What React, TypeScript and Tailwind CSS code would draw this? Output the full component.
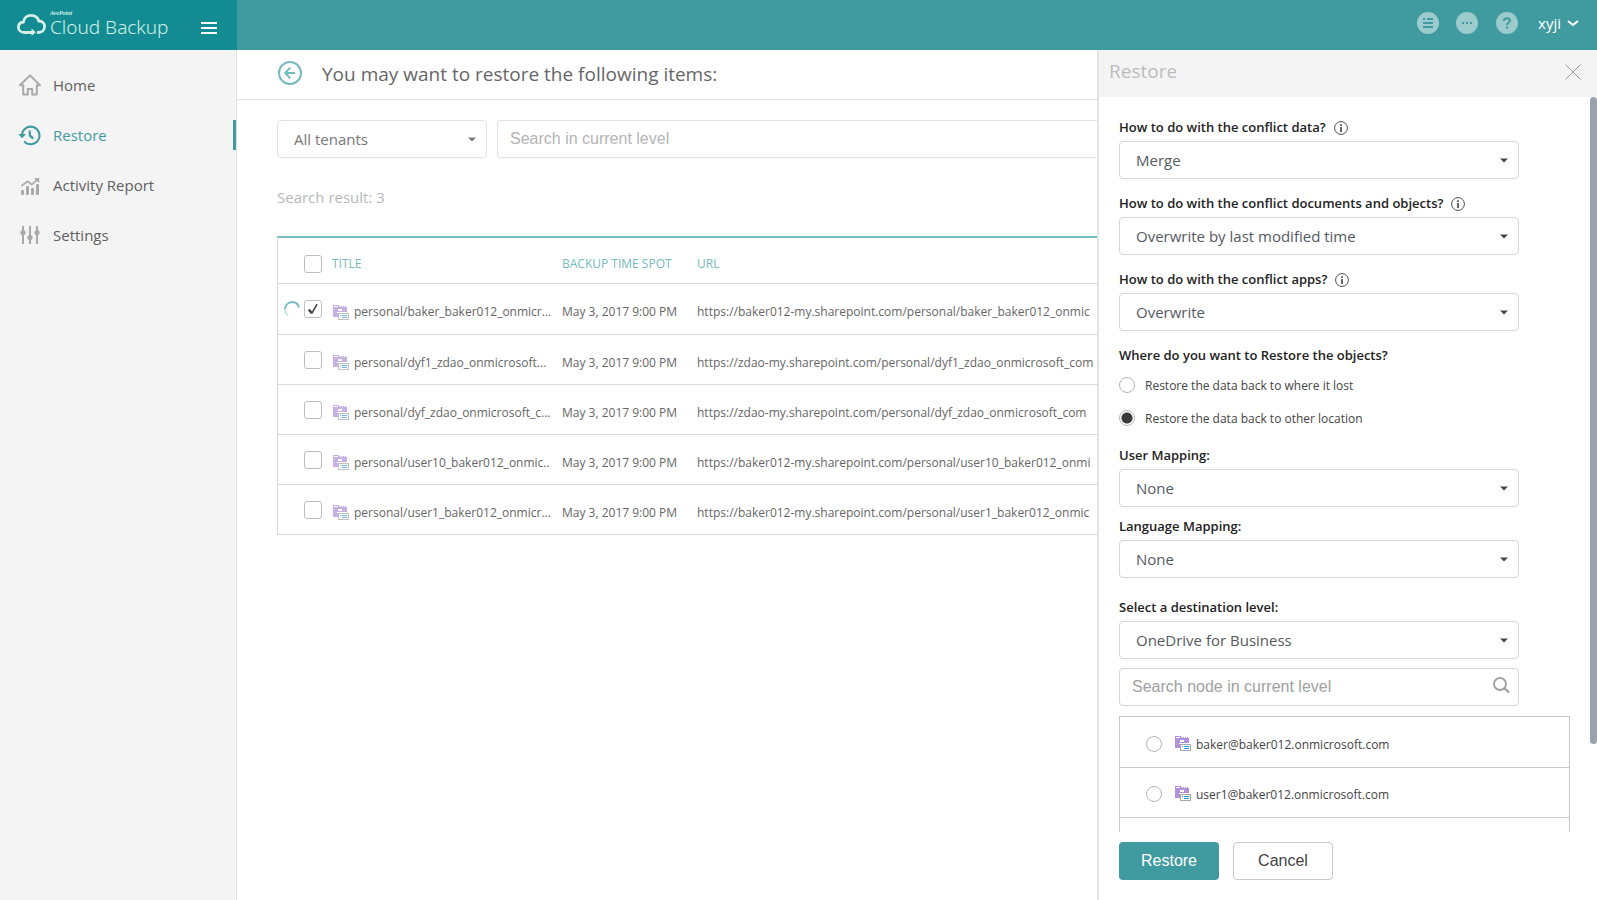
import React, { useState } from "react";

const SANS = "font-['Open_Sans','Noto_Sans',sans-serif]";
const ARIAL = "font-['Liberation_Sans',Arial,sans-serif]";

type IconProps = { className?: string };

function CloudLogo() {
  return (
    <svg width="30" height="24" viewBox="0 0 30 24" fill="none" stroke="#d3efe8" strokeWidth="2.8" aria-hidden="true">
      <path d="M17 19.5H8.5C5 19.5 2.4 17.4 2.4 14.2C2.4 11.4 4.4 9.3 7.4 9C8.2 5 11.2 2.4 15.2 2.4C19.1 2.4 21.8 4.6 22.8 8C26.2 8 28.6 10.4 28.6 13.6C28.6 17 26 19.5 22.4 19.5H21" />
      <path d="M15.5 15.6L20 19.2L15.5 22.8Z" fill="#d3efe8" stroke="none" />
    </svg>
  );
}

function HomeIcon() {
  return (
    <svg width="24" height="24" viewBox="0 0 24 24" fill="none" stroke="#a9a9a9" strokeWidth="2" strokeLinejoin="round" aria-hidden="true">
      <path d="M2 12.2L12 2.4L22 12.2H18.8V21.6H14.2V16H9.8V21.6H5.2V12.2Z" />
    </svg>
  );
}

function RestoreIcon() {
  return (
    <svg width="24" height="24" viewBox="0 0 24 24" fill="none" stroke="#409ba0" strokeWidth="2" aria-hidden="true">
      <path d="M4 11.2A8.8 8.8 0 1 1 6.2 18.4" />
      <path d="M0.2 11H8L4.1 15.2Z" fill="#409ba0" stroke="none" />
      <path d="M11.8 7.4V12.4L15.2 15.6" strokeWidth="2.2" />
    </svg>
  );
}

function ReportIcon() {
  return (
    <svg width="24" height="24" viewBox="0 0 24 24" fill="#a9a9a9" aria-hidden="true">
      <rect x="3" y="17" width="3" height="5" rx="1" />
      <rect x="8" y="13" width="3" height="9" rx="1" />
      <rect x="13" y="15" width="3" height="7" rx="1" />
      <rect x="18" y="11" width="3" height="11" rx="1" />
      <path d="M3.4 13L9.6 8.4L13.8 11.6L19.6 6.2" fill="none" stroke="#a9a9a9" strokeWidth="1.8" />
      <path d="M16 5H21.2V10.2Z" />
    </svg>
  );
}

function SettingsIcon() {
  return (
    <svg width="24" height="24" viewBox="0 0 24 24" fill="#a9a9a9" aria-hidden="true">
      <rect x="4" y="3" width="2" height="18" />
      <rect x="11" y="3" width="2" height="18" />
      <rect x="18" y="3" width="2" height="18" />
      <circle cx="5" cy="9.5" r="2.6" />
      <circle cx="12" cy="14.5" r="2.6" />
      <circle cx="19" cy="9.5" r="2.6" />
    </svg>
  );
}

function SiteIcon({ className }: IconProps) {
  return (
    <svg className={`shrink-0 ${className}`} width="16" height="15" viewBox="0 0 16 15" shapeRendering="crispEdges" aria-hidden="true">
      <path d="M0 0H6V1H7V2H8V1H9V2H10V1H11V2H12V1H13V2H14V8H5V12H0Z" fill="#b091da" />
      <path d="M1 1H5V2H1ZM5 4H9V6H5Z" fill="#fff" />
      <path d="M4 7H16V8H4Z" fill="#fff" />
      <rect x="5.5" y="8.5" width="10" height="6" fill="#fff" stroke="#a8a8a8" />
      <path d="M7 10H8V11H7ZM9 10H14V11H9ZM9 12H14V13H9Z" fill="#2a9fe0" />
    </svg>
  );
}

function Caret({ className }: IconProps) {
  return (
    <svg className={`pointer-events-none absolute right-[11px] top-[17px] ${className}`} width="8" height="5" viewBox="0 0 8 5" aria-hidden="true">
      <path d="M0 0.5H8L4 4.5Z" fill="currentColor" />
    </svg>
  );
}

function InfoIcon() {
  return (
    <svg width="14" height="14" viewBox="0 0 14 14" fill="none" stroke="#4a4a4a" aria-hidden="true">
      <circle cx="7" cy="7" r="6.4" />
      <path d="M7 3.2V5M7 6V11" strokeWidth="1.7" />
    </svg>
  );
}

function BackIcon() {
  return (
    <svg width="24" height="24" viewBox="0 0 24 24" fill="none" stroke="#75bbbd" strokeWidth="2" aria-hidden="true">
      <circle cx="12" cy="12" r="11" />
      <path d="M17 12H7.5M12.2 6.6L7.2 12L12.2 17.4" />
    </svg>
  );
}

function Spinner() {
  return (
    <svg width="18" height="18" viewBox="0 0 18 18" fill="none" strokeWidth="2" aria-hidden="true">
      <path d="M5 15.2A7.3 7.3 0 0 1 2 9" stroke="#c9e6e7" />
      <path d="M2 9A7.3 7.3 0 0 1 9 2A7.3 7.3 0 0 1 16 7.5" stroke="#79bfc1" />
    </svg>
  );
}

function SearchIcon() {
  return (
    <svg className="absolute right-[9px] top-[9px]" width="17" height="17" viewBox="0 0 17 17" fill="none" stroke="#a3a3a3" strokeWidth="2" aria-hidden="true">
      <circle cx="7" cy="7" r="6" />
      <path d="M11.2 11.2L16 15.4" strokeWidth="2.4" />
    </svg>
  );
}

const navItems = [
  { label: "Home", Icon: HomeIcon, active: false },
  { label: "Restore", Icon: RestoreIcon, active: true },
  { label: "Activity Report", Icon: ReportIcon, active: false },
  { label: "Settings", Icon: SettingsIcon, active: false },
];

const rows = [
  { title: "personal/baker_baker012_onmicr...", url: "https://baker012-my.sharepoint.com/personal/baker_baker012_onmic" },
  { title: "personal/dyf1_zdao_onmicrosoft...", url: "https://zdao-my.sharepoint.com/personal/dyf1_zdao_onmicrosoft_com" },
  { title: "personal/dyf_zdao_onmicrosoft_c...", url: "https://zdao-my.sharepoint.com/personal/dyf_zdao_onmicrosoft_com" },
  { title: "personal/user10_baker012_onmic..", url: "https://baker012-my.sharepoint.com/personal/user10_baker012_onmi" },
  { title: "personal/user1_baker012_onmicr...", url: "https://baker012-my.sharepoint.com/personal/user1_baker012_onmic" },
];

function Check(props: { label: string; checked?: boolean; onChange?: () => void }) {
  return (
    <span className="relative block size-[18px]">
      <input
        type="checkbox"
        aria-label={props.label}
        checked={props.checked ?? false}
        onChange={props.onChange ?? (() => {})}
        className="block size-[18px] appearance-none rounded-[3px] border border-[#bdbdbd] bg-white"
      />
      {props.checked && (
        <svg className="pointer-events-none absolute left-0 top-0" width="18" height="18" viewBox="0 0 18 18" fill="none" stroke="#444" aria-hidden="true">
          <path d="M4.8 9.6L8 13.2" strokeWidth="2.4" />
          <path d="M7.8 13.4L13 4.2" strokeWidth="1.6" />
        </svg>
      )}
    </span>
  );
}

function Field(props: { id: string; label: string; value: string; info?: boolean; className: string }) {
  return (
    <div className={props.className}>
      <div className="flex h-7 items-center gap-2 pt-px">
        <label htmlFor={props.id} className="text-[13px] font-semibold text-[#222]">
          {props.label}
        </label>
        {props.info && <InfoIcon />}
      </div>
      <div className="relative">
        <select
          id={props.id}
          className="block h-[38px] w-full appearance-none rounded border border-[#d5d5d5] bg-white pl-4 pr-8 text-[15px] text-[#555a5f]"
        >
          <option>{props.value}</option>
        </select>
        <Caret className="text-[#444]" />
      </div>
    </div>
  );
}

const radioClass =
  "block size-4 shrink-0 appearance-none rounded-full border border-[#b5b5b5] bg-white checked:bg-[radial-gradient(circle,#3a3a3a_5px,#fff_6px)]";

export default function App() {
  const [picked, setPicked] = useState([true, false, false, false, false]);
  const [place, setPlace] = useState("other");

  return (
    <div className={`flex h-screen flex-col bg-white text-[#666] ${SANS}`}>
      <header className="flex h-[50px] shrink-0 bg-[#409ba0]">
        <div className="flex w-[237px] shrink-0 items-center bg-[#128c92] pl-4">
          <CloudLogo />
          <div className="flex flex-col pl-1 font-['Noto_Sans',sans-serif] text-[#d3efe8]">
            <span className="h-1 font-['Liberation_Serif',serif] text-[6px] font-bold italic leading-[4px]">AvePoint</span>
            <span className="text-[19px] font-light leading-6">Cloud Backup</span>
          </div>
          <button type="button" aria-label="Toggle menu" className="ml-auto mr-5 mt-1.5 flex w-4 flex-col gap-[3px]">
            <span className="h-0.5 bg-white" />
            <span className="h-0.5 bg-white" />
            <span className="h-0.5 bg-white" />
          </button>
        </div>
        <div className="flex flex-1 items-center justify-end pb-1 pr-[18px]">
          <button type="button" aria-label="Tasks" className="mr-[17px] flex size-[22px] items-center justify-center rounded-full bg-[#9ccbcd]">
            <svg width="10" height="10" viewBox="0 0 10 10" fill="#409ba0" aria-hidden="true">
              <path d="M0 0H2V2H0ZM4 0H10V2H4ZM0 4H10V6H0ZM0 8H10V10H0Z" />
            </svg>
          </button>
          <button type="button" aria-label="More" className="mr-[18px] flex size-[22px] items-center justify-center rounded-full bg-[#9ccbcd]">
            <svg width="10" height="2" viewBox="0 0 10 2" fill="#409ba0" aria-hidden="true">
              <path d="M0 0H2V2H0ZM4 0H6V2H4ZM8 0H10V2H8Z" />
            </svg>
          </button>
          <button type="button" aria-label="Help" className="mr-5 flex size-[22px] items-center justify-center rounded-full bg-[#9ccbcd]">
            <svg width="10" height="12" viewBox="0 0 10 12" fill="none" stroke="#409ba0" strokeWidth="2" aria-hidden="true">
              <path d="M1.8 4C1.8 2 3.2 1.2 5 1.2C6.8 1.2 8 2.2 8 3.7C8 5.6 5 5.6 5 8.2M5 9.6V11.6" />
            </svg>
          </button>
          <button type="button" className="flex items-center gap-1.5 text-[15px] text-white">
            xyji
            <svg width="12" height="8" viewBox="0 0 12 8" fill="none" stroke="#fff" strokeWidth="2" aria-hidden="true">
              <path d="M1 2L6 6L11 2" />
            </svg>
          </button>
        </div>
      </header>

      <div className="flex min-h-0 flex-1">
        <nav className="w-[237px] shrink-0 border-r border-[#e0e0e0] bg-[#f4f4f4] pt-[10px]">
          {navItems.map(({ label, Icon, active }) => (
            <a
              key={label}
              href="#"
              className={`flex h-[50px] items-center justify-between pl-[18px] text-[15px] ${active ? "text-[#409ba0]" : "text-[#5f5f5f]"}`}
            >
              <span className="flex items-center gap-[11px]">
                <Icon />
                {label}
              </span>
              {active && <span className="h-[30px] w-[3px] bg-[#409ba0]" />}
            </a>
          ))}
        </nav>

        <main className="min-w-0 flex-1 overflow-hidden">
          <div className="flex h-[50px] gap-5 border-b border-[#e4e4e4] pl-10">
            <a href="#" aria-label="Back" className="pl-px pt-[11px]">
              <BackIcon />
            </a>
            <h1 className="text-[19px] leading-[48px]">You may want to restore the following items:</h1>
          </div>

          <div className="pl-10 pt-5">
            <div className="flex gap-[10px]">
              <div className="relative w-[210px] shrink-0">
                <select aria-label="Tenants" className="block h-[38px] w-full appearance-none rounded border border-[#e2e2e2] bg-white pl-4 text-[15px] text-[#777]">
                  <option>All tenants</option>
                </select>
                <Caret className="text-[#777]" />
              </div>
              <input
                type="text"
                aria-label="Search in current level"
                placeholder="Search in current level"
                className={`h-[38px] min-w-0 flex-1 rounded-l border border-r-0 border-[#e2e2e2] px-3 pb-px text-base placeholder:text-[#b4b4b4] ${ARIAL}`}
              />
            </div>
            <p className="mt-7 h-[22px] text-[15px] leading-[22px] text-[#b8b8b8]">Search result: 3</p>

            <table className="mt-7 w-full table-fixed border-separate border-spacing-0 border-l border-t-2 border-l-[#dadada] border-t-[#75bbbd] text-left text-xs">
              <colgroup>
                <col className="w-[26px]" />
                <col className="w-[28px]" />
                <col className="w-[230px]" />
                <col className="w-[135px]" />
                <col />
              </colgroup>
              <thead>
                <tr className="h-[46px] text-xs text-[#75bbbd] [&>th]:border-b [&>th]:border-[#dadada] [&>th]:p-0 [&>th]:pt-1.5 [&>th]:font-normal">
                  <th />
                  <th>
                    <Check label="Select all" />
                  </th>
                  <th>TITLE</th>
                  <th>BACKUP TIME SPOT</th>
                  <th>URL</th>
                </tr>
              </thead>
              <tbody>
                {rows.map((row, i) => (
                  <tr key={row.url} className="h-[50px] first:h-[51px] [&>td]:border-b [&>td]:border-[#dadada] [&>td]:p-0">
                    <td className="pl-[5px]!">{i === 0 && <Spinner />}</td>
                    <td>
                      <Check label={row.title} checked={picked[i]} onChange={() => setPicked(picked.map((p, j) => (j === i ? !p : p)))} />
                    </td>
                    <td className="pt-1.5!">
                      <div className="flex items-center gap-[5px] whitespace-nowrap pl-px">
                        <SiteIcon className="opacity-70" />
                        {row.title}
                      </div>
                    </td>
                    <td className="whitespace-nowrap pt-1.5!">May 3, 2017 9:00 PM</td>
                    <td className="overflow-hidden whitespace-nowrap pt-1.5!">{row.url}</td>
                  </tr>
                ))}
              </tbody>
            </table>
          </div>
        </main>

        <aside className="flex w-[500px] shrink-0 flex-col border-l-2 border-[#e4e4e4] bg-white">
          <div className="flex h-[47px] shrink-0 items-center justify-between bg-[#f4f4f4] pb-1 pl-[10px] pr-4">
            <h2 className="text-[19px] text-[#bcbcbc]">Restore</h2>
            <button type="button" aria-label="Close">
              <svg width="16" height="16" viewBox="0 0 16 16" stroke="#9a9a9a" aria-hidden="true">
                <path d="M0.5 0.5L15.5 15.5M15.5 0.5L0.5 15.5" />
              </svg>
            </button>
          </div>

          <div className="relative min-h-0 flex-1">
            <div className="h-full overflow-y-auto pl-5 pr-[27px] pt-4 [scrollbar-width:none]">
              <div className="w-[400px]">
                <Field id="conflict-data" label="How to do with the conflict data?" value="Merge" info className="mb-[10px]" />
                <Field id="conflict-docs" label="How to do with the conflict documents and objects?" value="Overwrite by last modified time" info className="mb-[10px]" />
                <Field id="conflict-apps" label="How to do with the conflict apps?" value="Overwrite" info className="mb-[10px]" />
                <fieldset>
                  <legend className="flex h-7 items-center pt-px text-[13px] font-semibold text-[#222]">Where do you want to Restore the objects?</legend>
                  <label className="flex h-8 items-center gap-[10px] text-xs text-[#444]">
                    <input type="radio" name="place" checked={place === "origin"} onChange={() => setPlace("origin")} className={radioClass} />
                    <span className="pt-0.5">Restore the data back to where it lost</span>
                  </label>
                  <label className="mb-[7px] flex h-[33px] items-center gap-[10px] text-xs text-[#444]">
                    <input type="radio" name="place" checked={place === "other"} onChange={() => setPlace("other")} className={radioClass} />
                    <span className="pt-0.5">Restore the data back to other location</span>
                  </label>
                </fieldset>
                <Field id="user-mapping" label="User Mapping:" value="None" className="mb-[5px]" />
                <Field id="language-mapping" label="Language Mapping:" value="None" className="mb-[15px]" />
                <Field id="destination" label="Select a destination level:" value="OneDrive for Business" className="mb-[9px]" />
                <div className="relative">
                  <input
                    type="text"
                    aria-label="Search node in current level"
                    placeholder="Search node in current level"
                    className={`block h-[38px] w-full rounded border border-[#d5d5d5] pb-px pl-3 pr-9 text-base placeholder:text-[#a0a0a0] ${ARIAL}`}
                  />
                  <SearchIcon />
                </div>
              </div>
              <ul className="mt-[10px] border border-[#c8c8c8]">
                {["baker@baker012.onmicrosoft.com", "user1@baker012.onmicrosoft.com"].map((name) => (
                  <li key={name} className="border-b border-[#c8c8c8] first:pt-px">
                    <label className="flex h-[49px] items-center pl-[26px] pt-0.5 text-xs text-[#444]">
                      <input type="radio" name="node" className={radioClass} />
                      <SiteIcon className="ml-[13px] mr-[5px]" />
                      <span className="pt-0.5">{name}</span>
                    </label>
                  </li>
                ))}
                <li className="h-[50px]" />
              </ul>
            </div>
            <div className="absolute right-0 top-0 h-[88%] w-[7px] rounded bg-[#98a3ad]" />
          </div>

          <div className={`flex shrink-0 gap-[14px] px-5 pb-5 pt-[10px] text-base ${ARIAL}`}>
            <button type="button" className="h-[38px] w-[100px] rounded bg-[#409ba0] text-white">
              Restore
            </button>
            <button type="button" className="h-[38px] w-[100px] rounded border border-[#c8c8c8] bg-white text-[#444]">
              Cancel
            </button>
          </div>
        </aside>
      </div>
    </div>
  );
}
